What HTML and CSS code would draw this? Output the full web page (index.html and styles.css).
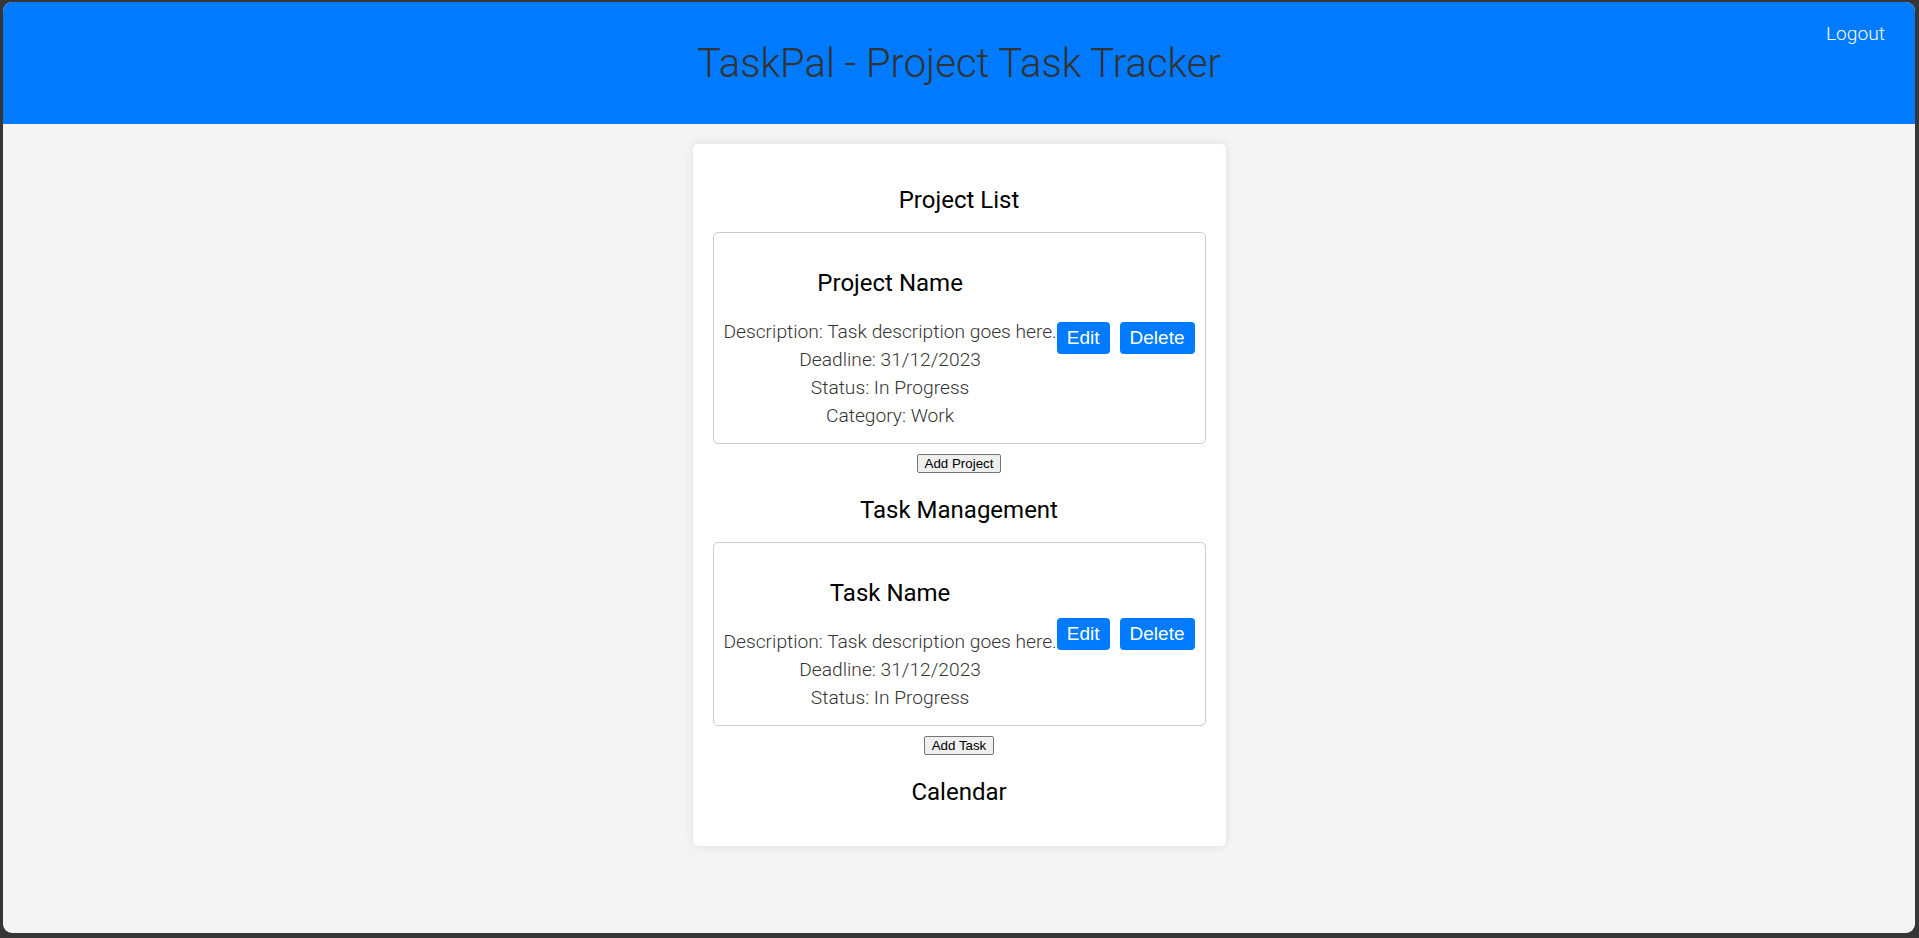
FILE: index.html
```html
<!DOCTYPE html>
<html lang="en">
<head>
<meta charset="UTF-8">
<title>TaskPal - Project Task Tracker</title>
<link rel="stylesheet" href="styles.css">
</head>
<body>
<div class="window">
  <header class="topbar">
    <h1 class="title">TaskPal - Project Task Tracker</h1>
    <a class="logout" href="#">Logout</a>
  </header>
  <main class="card">
    <section class="section">
      <h2 class="section-title">Project List</h2>
      <div class="item">
        <div class="item-info">
          <h3 class="item-name">Project Name</h3>
          <p class="item-line">Description: Task description goes here.</p>
          <p class="item-line">Deadline: 31/12/2023</p>
          <p class="item-line">Status: In Progress</p>
          <p class="item-line">Category: Work</p>
        </div>
        <div class="item-actions">
          <button class="action-btn">Edit</button>
          <button class="action-btn">Delete</button>
        </div>
      </div>
      <div class="add-row"><button class="add-btn">Add Project</button></div>
    </section>
    <section class="section">
      <h2 class="section-title">Task Management</h2>
      <div class="item">
        <div class="item-info">
          <h3 class="item-name">Task Name</h3>
          <p class="item-line">Description: Task description goes here.</p>
          <p class="item-line">Deadline: 31/12/2023</p>
          <p class="item-line">Status: In Progress</p>
        </div>
        <div class="item-actions">
          <button class="action-btn">Edit</button>
          <button class="action-btn">Delete</button>
        </div>
      </div>
      <div class="add-row"><button class="add-btn">Add Task</button></div>
    </section>
    <section class="section">
      <h2 class="section-title">Calendar</h2>
    </section>
  </main>
</div>
</body>
</html>
```
FILE: styles.css
```css
html, body {
  margin: 0;
  padding: 0;
  height: 100%;
}

body {
  background: #363636;
  font-family: Roboto, "Liberation Sans", sans-serif;
  font-weight: 300;
  color: #333;
  overflow: hidden;
}

.window {
  margin: 2px 4px 0 3px;
  height: calc(100vh - 7px);
  background: #f4f4f4;
  border-radius: 9px;
  overflow: hidden;
  display: flex;
  flex-direction: column;
  align-items: center;
}

.topbar {
  position: relative;
  align-self: stretch;
  height: 122px;
  background: #007bff;
  display: flex;
  align-items: center;
  justify-content: center;
}

.title {
  margin: 0;
  font-size: 40px;
  font-weight: 300;
  color: #333;
}

.logout {
  position: absolute;
  top: 20px;
  right: 30px;
  font-size: 19.2px;
  font-weight: 300;
  color: #fff;
  text-decoration: none;
}

.card {
  margin-top: 20px;
  width: 533px;
  box-sizing: border-box;
  padding: 22px 20px 22px;
  background: #fff;
  border-radius: 5px;
  box-shadow: 0 0 10px rgba(0, 0, 0, 0.1);
  display: flow-root;
}

.section-title {
  margin: 20px 0 18px;
  font-size: 24px;
  font-weight: 400;
  color: #000;
  text-align: center;
}

.item {
  border: 1px solid #ccc;
  border-radius: 5px;
  padding: 0 10px;
  display: flex;
  align-items: center;
  justify-content: space-between;
}

.item-info {
  text-align: center;
  padding: 10px 0 11px;
  flex-shrink: 0;
}

.item-name {
  margin: 26px 0 23px;
  font-size: 24px;
  font-weight: 400;
  color: #000;
}

.item-line {
  margin: 4px 0;
  font-size: 19.2px;
  line-height: 24px;
  color: #333;
  white-space: nowrap;
}

.item-actions {
  display: flex;
  gap: 10px;
}

.action-btn {
  font-family: "Liberation Sans", Arial, sans-serif;
  font-size: 19px;
  padding: 5px 10px;
  border: none;
  border-radius: 4px;
  background: #007bff;
  color: #fff;
}

.add-row {
  display: flex;
  justify-content: center;
  margin-top: 10px;
  padding-bottom: 3px;
}

.add-btn {
  font-family: "Liberation Sans", Arial, sans-serif;
  font-size: 13.333px;
  padding: 1px 7px;
  border: 1px solid #767676;
  border-radius: 2px;
  background: #efefef;
  color: #000;
}
```
